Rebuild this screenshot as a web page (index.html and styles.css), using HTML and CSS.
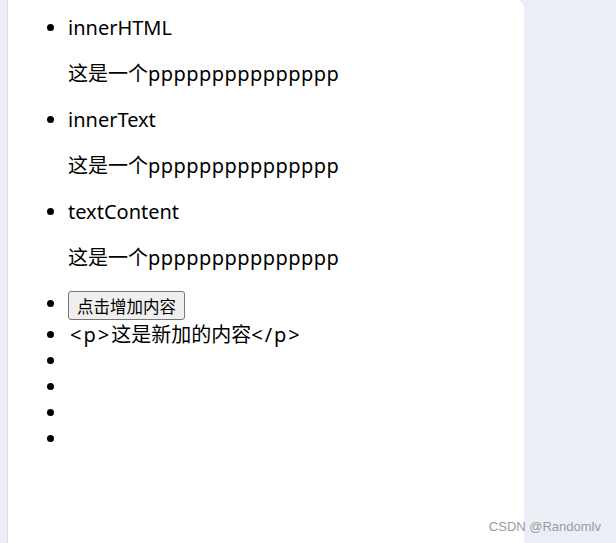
FILE: index.html
```html
<!DOCTYPE html>
<html lang="zh">
<head>
<meta charset="utf-8">
<link rel="stylesheet" href="styles.css">
</head>
<body>
<div class="shell">
  <main class="panel">
    <ul class="list">
      <li class="item">innerHTML<p class="para">这是一个<span class="pp">ppppppppppppppp</span></p></li>
      <li class="item">innerText<p class="para">这是一个<span class="pp">ppppppppppppppp</span></p></li>
      <li class="item">textContent<p class="para">这是一个<span class="pp">ppppppppppppppp</span></p></li>
      <li class="item item-btn"><button class="btn" type="button">点击增加内容</button></li>
      <li class="item"><span class="tag tag-open">&lt;p&gt;</span>这是新加的内容<span class="tag">&lt;/p&gt;</span></li>
      <li class="item item-empty"></li>
      <li class="item item-empty"></li>
      <li class="item item-empty"></li>
      <li class="item item-empty"></li>
    </ul>
  </main>
  <aside class="side"></aside>
</div>
<div class="mark">CSDN @Randomlv</div>
</body>
</html>
```
FILE: styles.css
```css
html, body {
  margin: 0;
  padding: 0;
  height: 100%;
}
body {
  background: #eceef5;
  font-family: "Noto Sans", "Noto Sans CJK SC", sans-serif;
  color: #000;
  overflow: hidden;
}
.shell {
  display: flex;
  height: 543px;
  padding-left: 7px;
}
.panel {
  width: 517px;
  background: #fff;
  border-left: 1px solid #dcdee5;
  border-top-right-radius: 8px;
  padding: 15px 0 0 10px;
  box-sizing: border-box;
}
.side {
  flex: 1;
}
.list {
  margin: 0;
  padding-left: 50px;
  font-size: 20px;
  line-height: 26px;
}
.item {
  min-height: 26px;
}
.para {
  margin: 20px 0;
}
.pp {
  letter-spacing: 0.45px;
}
.tag {
  letter-spacing: 2px;
}
.tag-open {
  margin-left: 2px;
}
.item-btn {
  height: 31px;
}
.btn {
  font-family: "Noto Sans CJK SC", sans-serif;
  font-size: 16.5px;
  line-height: 20px;
  height: 29px;
  padding: 2px 8px;
  background: #efefef;
  border: 1px solid #767676;
  border-radius: 3px;
  color: #000;
  vertical-align: middle;
}
.item-empty {
  height: 26px;
}
.mark {
  position: absolute;
  right: 15px;
  bottom: 9px;
  font-family: "Liberation Sans", Arial, sans-serif;
  font-size: 13px;
  color: #9a9ba1;
}
```
